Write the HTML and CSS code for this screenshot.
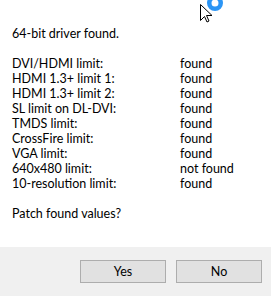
FILE: index.html
```html
<!DOCTYPE html>
<html lang="en">
<head>
    <meta charset="UTF-8">
    <title>Patch</title>
    <link rel="stylesheet" href="styles.css">
</head>
<body>

    <div class="dialog">
        <div class="content">
            <p class="line">64-bit driver found.</p>
            <div class="results">
                <span>DVI/HDMI limit:</span><span>found</span>
                <span>HDMI 1.3+ limit 1:</span><span>found</span>
                <span>HDMI 1.3+ limit 2:</span><span>found</span>
                <span>SL limit on DL-DVI:</span><span>found</span>
                <span>TMDS limit:</span><span>found</span>
                <span>CrossFire limit:</span><span>found</span>
                <span>VGA limit:</span><span>found</span>
                <span>640x480 limit:</span><span>not found</span>
                <span>10-resolution limit:</span><span>found</span>
            </div>
            <p class="line">Patch found values?</p>
        </div>
        <div class="footer">
            <button class="btn">Yes</button>
            <button class="btn">No</button>
        </div>
    </div>

    <svg class="cursor" width="30" height="24" viewBox="0 0 30 24">
        <path d="M5.5 4.5 L5.5 20.5 L9.5 16.5 L12 22 L14 21 L11.5 15.5 L17 15.5 Z" fill="#fff" stroke="#000" stroke-width="1"/>
        <circle cx="20" cy="3" r="5.75" fill="none" stroke="#2b95f5" stroke-width="4.5"/>
    </svg>

</body>
</html>
```

FILE: styles.css
```css
body {
    margin: 0;
    background: #fff;
    font-family: Lato, sans-serif;
    font-size: 12.5px;
    color: #000;
}
.dialog {
    width: 271px;
    height: 296px;
    display: flex;
    flex-direction: column;
}
.content {
    flex: 1;
    padding: 26px 12px 0 12px;
    line-height: 15px;
}
.line {
    margin: 0;
}
.results {
    display: grid;
    grid-template-columns: 168px auto;
    margin: 15px 0;
}
.footer {
    height: 49px;
    background: #f0f0f0;
    display: flex;
    justify-content: flex-end;
    align-items: flex-start;
    gap: 10px;
    padding: 13px 9px 0 0;
    box-sizing: border-box;
}
.btn {
    width: 86px;
    height: 23px;
    background: #e1e1e1;
    border: 1px solid #adadad;
    font-family: inherit;
    font-size: 12.5px;
    color: #000;
    padding: 0;
}
.cursor {
    position: absolute;
    left: 195px;
    top: 0;
}
```
